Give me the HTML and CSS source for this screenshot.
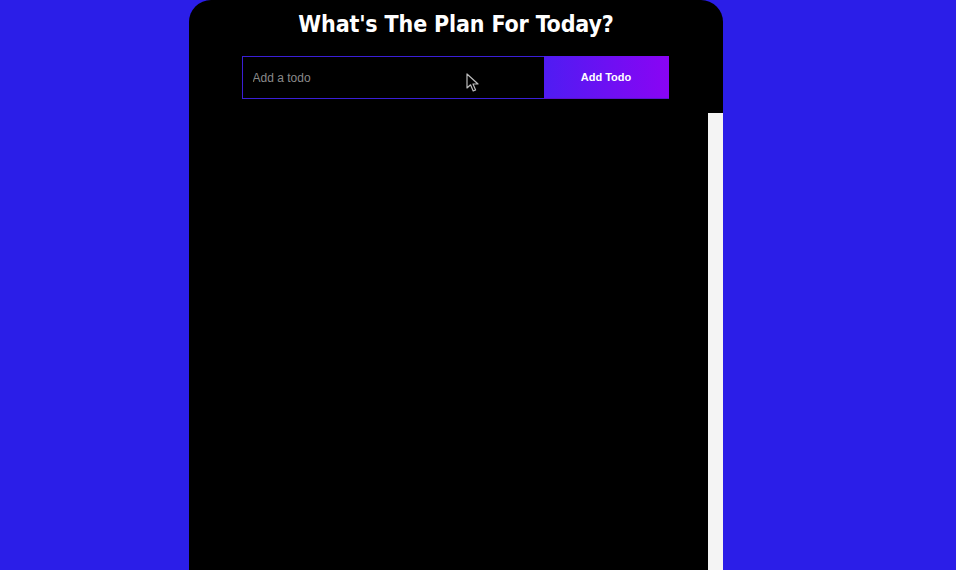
FILE: index.html
```html
<!DOCTYPE html>
<html>
<head>
<meta charset="utf-8">
<link rel="stylesheet" href="styles.css">
</head>
<body>
<div class="app">
  <div class="top">
    <h1 class="title">What's The Plan For Today?</h1>
    <form class="todo-form">
      <input class="todo-input" type="text" placeholder="Add a todo">
      <button class="todo-button" type="button">Add Todo</button>
    </form>
  </div>
  <div class="body">
    <div class="list"></div>
    <div class="scroll"></div>
  </div>
  <svg class="cursor" width="14" height="20" viewBox="0 0 14 20">
    <path d="M1 1 L1 15 L4.5 11.8 L7.2 18 L9.6 17 L7 11 L12 11 Z" fill="#000" stroke="#bbb" stroke-width="1.2" stroke-linejoin="round"/>
  </svg>
</div>
</body>
</html>
```
FILE: styles.css
```css
html, body {
  margin: 0;
  padding: 0;
  height: 100%;
  overflow: hidden;
}
body {
  background: #2b1ee8;
  font-family: "Liberation Sans", Arial, sans-serif;
  display: flex;
  padding-left: 189px;
  box-sizing: border-box;
}
.app {
  position: relative;
  width: 534px;
  height: 100vh;
  background: #000;
  border-radius: 22px 22px 0 0;
  display: flex;
  flex-direction: column;
}
.top {
  display: flex;
  flex-direction: column;
  align-items: center;
  height: 113px;
  flex: none;
}
.title {
  margin: 9px 0 0;
  color: #fff;
  font-family: "DejaVu Sans Condensed", "DejaVu Sans", sans-serif;
  font-weight: bold;
  font-size: 23px;
  letter-spacing: -0.15px;
  line-height: 30px;
}
.todo-form {
  margin: 17px 0 0 -2px;
  display: flex;
  height: 43px;
}
.todo-input {
  width: 302px;
  height: 43px;
  box-sizing: border-box;
  background: #000;
  border: 1px solid #3a1fd6;
  border-right: none;
  padding: 0 10px;
  color: #fff;
  font-family: "Liberation Sans", Arial, sans-serif;
  font-size: 12px;
  outline: none;
}
.todo-input::placeholder {
  color: #8a8a8a;
}
.todo-button {
  width: 125px;
  height: 43px;
  border: none;
  border-bottom: 1px solid #5a10d0;
  background: linear-gradient(90deg, #4f1cf2 0%, #8a04f4 100%);
  color: #fff;
  font-family: "Liberation Sans", Arial, sans-serif;
  font-size: 11px;
  font-weight: bold;
  padding: 0;
}
.body {
  flex: 1;
  display: flex;
}
.list {
  flex: 1;
}
.scroll {
  width: 15px;
  background: #f4f4f4;
}
.cursor {
  position: absolute;
  left: 277px;
  top: 73px;
}
```
